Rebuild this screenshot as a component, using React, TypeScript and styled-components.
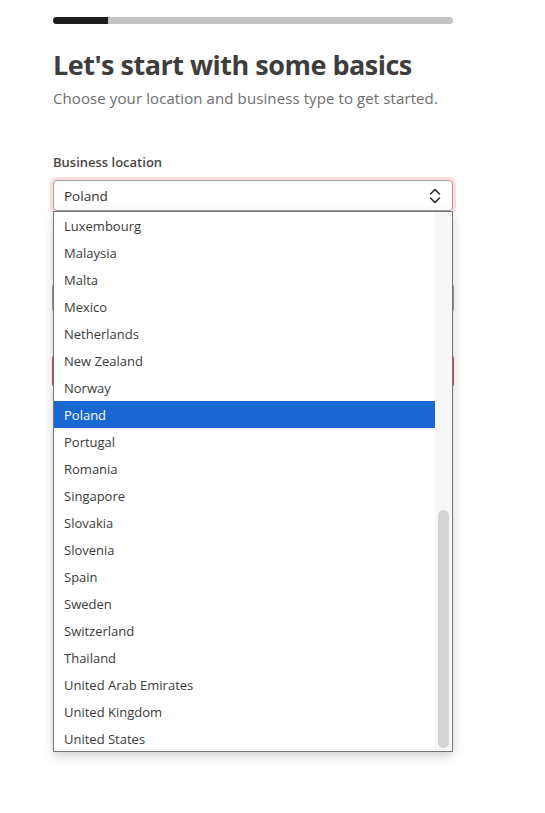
import React from "react";
import styled, { createGlobalStyle } from "styled-components";

const countries = [
  "Luxembourg",
  "Malaysia",
  "Malta",
  "Mexico",
  "Netherlands",
  "New Zealand",
  "Norway",
  "Poland",
  "Portugal",
  "Romania",
  "Singapore",
  "Slovakia",
  "Slovenia",
  "Spain",
  "Sweden",
  "Switzerland",
  "Thailand",
  "United Arab Emirates",
  "United Kingdom",
  "United States",
];

const selected = "Poland";

const GlobalStyle = createGlobalStyle`
  html, body {
    margin: 0;
    background: #ffffff;
    font-family: "Open Sans", "Noto Sans", sans-serif;
    color: #333333;
  }
`;

const Page = styled.div`
  width: 400px;
  min-height: 796px;
  padding: 17px 0 0 53px;
  display: flex;
  flex-direction: column;
`;

const Progress = styled.div`
  height: 7px;
  border-radius: 4px;
  background: #c4c4c4;
  overflow: hidden;
  display: flex;
`;

const ProgressFill = styled.div<{ $pct: number }>`
  width: ${(p) => p.$pct}%;
  background: #1e1e1e;
`;

const Title = styled.h1`
  margin: 23px 0 0;
  font-size: 27px;
  line-height: 36px;
  font-weight: 700;
  color: #3d3d3d;
  letter-spacing: -0.5px;
  white-space: nowrap;
`;

const Subtitle = styled.p`
  margin: 4px 0 0;
  font-size: 15px;
  line-height: 22px;
  color: #6e6e6e;
  letter-spacing: 0.1px;
  white-space: nowrap;
`;

const Form = styled.div`
  margin-top: 44px;
  display: flex;
  flex-direction: column;
`;

const Field = styled.div`
  position: relative;
  z-index: 2;
  display: flex;
  flex-direction: column;
  gap: 9px;
`;

const Label = styled.label`
  font-size: 13px;
  line-height: 18px;
  font-weight: 600;
  color: #474747;
`;

const SelectBox = styled.div<{ $focus?: boolean }>`
  height: 31px;
  box-sizing: border-box;
  border: 1px solid #a3a3a3;
  border-radius: 4px;
  padding: 0 10px;
  display: flex;
  align-items: center;
  justify-content: space-between;
  font-size: 13.5px;
  font-weight: 500;
  color: #333333;
  box-shadow: ${(p) => (p.$focus ? "0 0 0 3px #ffdcdc" : "none")};
`;

/* fields further down the form, covered by the open list */
const Control = styled.div<{ $mt: number; $h: number; $error?: boolean }>`
  margin: ${(p) => p.$mt}px -1px 0;
  height: ${(p) => p.$h}px;
  box-sizing: border-box;
  border: 1px solid ${(p) => (p.$error ? "#e0484f" : "#9a9a9a")};
  border-radius: 4px;
`;

const Chevrons = () => (
  <svg width="14" height="18" viewBox="0 0 14 18" fill="none">
    <path
      d="M2.5 7L7 2.5L11.5 7M2.5 11L7 15.5L11.5 11"
      stroke="#2b2b2b"
      strokeWidth="1.6"
      strokeLinecap="round"
      strokeLinejoin="round"
    />
  </svg>
);

const Popup = styled.div`
  position: absolute;
  top: 58px;
  left: 0;
  right: 0;
  height: 541px;
  box-sizing: border-box;
  border: 1px solid #767676;
  background: #ffffff;
  box-shadow: 0 4px 10px rgba(0, 0, 0, 0.18);
  display: flex;
`;

const Options = styled.ul`
  flex: 1;
  margin: 0;
  padding: 0;
  list-style: none;
`;

const Option = styled.li<{ $active?: boolean }>`
  height: 27px;
  padding-left: 10px;
  display: flex;
  align-items: center;
  font-size: 13px;
  color: ${(p) => (p.$active ? "#ffffff" : "#3b3b3b")};
  background: ${(p) => (p.$active ? "#1967d2" : "transparent")};
`;

const Track = styled.div`
  width: 17px;
  background: #f7f7f7;
  display: flex;
  flex-direction: column;
  justify-content: flex-end;
  align-items: center;
  padding-bottom: 3px;
`;

const Thumb = styled.div`
  width: 11px;
  height: 238px;
  border-radius: 6px;
  background: #d4d4d4;
`;

export default function App() {
  return (
    <>
      <GlobalStyle />
      <Page>
        <Progress>
          <ProgressFill $pct={13.75} />
        </Progress>
        <Title>Let's start with some basics</Title>
        <Subtitle>Choose your location and business type to get started.</Subtitle>
        <Form>
          <Field>
            <Label>Business location</Label>
            <SelectBox $focus>
              <span>{selected}</span>
              <Chevrons />
            </SelectBox>
            <Popup>
              <Options>
                {countries.map((c) => (
                  <Option key={c} $active={c === selected}>
                    {c}
                  </Option>
                ))}
              </Options>
              <Track>
                <Thumb />
              </Track>
            </Popup>
          </Field>
          <Control $mt={72} $h={30} />
          <Control $mt={41} $h={34} $error />
        </Form>
      </Page>
    </>
  );
}
